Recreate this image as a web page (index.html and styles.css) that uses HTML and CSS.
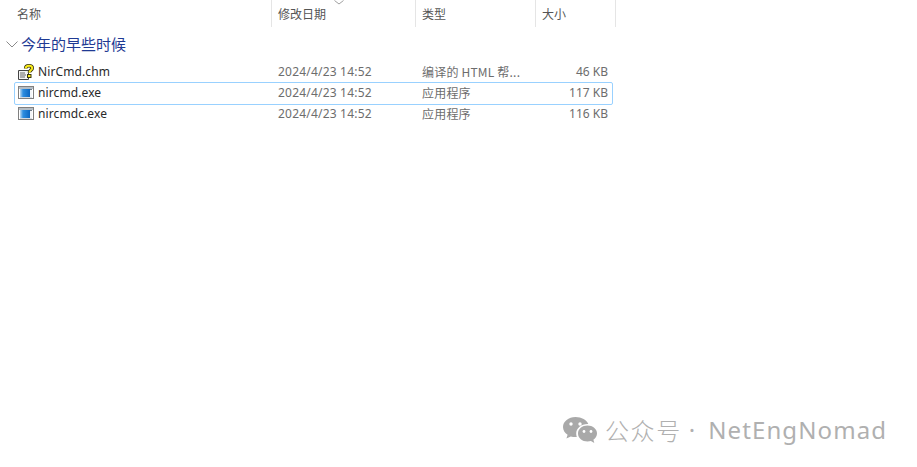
FILE: index.html
```html
<!DOCTYPE html>
<html lang="zh">
<head>
<meta charset="utf-8">
<title>NirCmd</title>
<link rel="stylesheet" href="styles.css">
</head>
<body>
<svg class="defs" width="0" height="0" aria-hidden="true">
  <defs>
    <linearGradient id="blue" x1="0" x2="1" y1="0" y2="0">
      <stop offset="0" stop-color="#bcd9f2"/>
      <stop offset="0.3" stop-color="#2f8ee0"/>
      <stop offset="1" stop-color="#0b66c2"/>
    </linearGradient>
  </defs>
  <symbol id="exe" viewBox="0 0 16 13">
    <rect x="0.5" y="0.5" width="15" height="12" fill="#fff" stroke="#808080"/>
    <rect x="1" y="1" width="14" height="2" fill="#b4bdc5"/>
    <rect x="2" y="3" width="10" height="8" fill="url(#blue)"/>
    <rect x="12" y="3" width="2" height="8" fill="#f4f6f8"/>
    <rect x="12" y="3" width="2" height="1" fill="#6d7a86"/>
    <rect x="2" y="11" width="12" height="1" fill="#d5dae0"/>
  </symbol>
</svg>
<main class="explorer">
  <header class="columns">
    <div class="col col-name">名称</div>
    <div class="col col-date">修改日期<svg class="sort" width="10" height="5" viewBox="0 0 10 5"><path d="M0.5 0.5L5 4L9.5 0.5" fill="none" stroke="#a0a0a0"/></svg></div>
    <div class="col col-type">类型</div>
    <div class="col col-size">大小</div>
  </header>
  <h2 class="group">
    <svg class="chevron" width="12" height="7" viewBox="0 0 12 7"><path d="M0.5 0.5L6 6L11.5 0.5" fill="none" stroke="#8a8a8a"/></svg>
    今年的早些时候
  </h2>
  <ul class="files">
    <li class="file">
      <span class="name">
        <svg class="icon" width="16" height="16" viewBox="0 0 16 16">
          <path d="M0.5 6.5H10.5V15.5H0.5Z" fill="#f4f4f4" stroke="#444"/>
          <path d="M2 9H7M2 11H8M2 13H7" stroke="#666"/>
          <path d="M7.7 4.4C7.7 2.4 9.4 1.8 11 1.8C12.8 1.8 14.2 2.6 14.2 4.2C14.2 6 11.4 6 11.4 8.6" fill="none" stroke="#3a3610" stroke-width="3.6"/>
          <path d="M7.7 4.4C7.7 2.4 9.4 1.8 11 1.8C12.8 1.8 14.2 2.6 14.2 4.2C14.2 6 11.4 6 11.4 8.6" fill="none" stroke="#f8ea1a" stroke-width="2"/>
          <rect x="9.5" y="10.5" width="3.5" height="3" fill="#f8ea1a" stroke="#3a3610"/>
        </svg>
        NirCmd.chm
      </span>
      <span class="date">2024/4/23 14:52</span>
      <span class="type">编译的 HTML 帮...</span>
      <span class="size">46 KB</span>
    </li>
    <li class="file selected">
      <span class="name"><svg class="icon" width="16" height="13"><use href="#exe"/></svg>nircmd.exe</span>
      <span class="date">2024/4/23 14:52</span>
      <span class="type">应用程序</span>
      <span class="size">117 KB</span>
    </li>
    <li class="file">
      <span class="name"><svg class="icon" width="16" height="13"><use href="#exe"/></svg>nircmdc.exe</span>
      <span class="date">2024/4/23 14:52</span>
      <span class="type">应用程序</span>
      <span class="size">116 KB</span>
    </li>
  </ul>
</main>
<aside class="watermark">
  <svg width="36" height="28" viewBox="0 0 36 28">
    <path d="M13.5 1C6.6 1 1 5.5 1 11C1 14.2 2.8 16.9 5.6 18.8L4.4 22.6L8.8 20.4C10.3 20.8 11.8 21 13.5 21C14 21 14.4 21 14.8 20.9C14.4 19.8 14.2 18.6 14.2 17.5C14.2 12.2 19.2 8 25.6 8C25.9 8 26.1 8 26.3 8C24.8 4 19.6 1 13.5 1Z" fill="#a9a9a9"/>
    <path d="M35 17.5C35 12.8 30.5 9.5 25.5 9.5C20.3 9.5 16 12.8 16 17.5C16 22.2 20.3 25.5 25.5 25.5C26.7 25.5 27.8 25.3 28.9 25L32.3 27L31.4 23.7C33.6 22.1 35 20 35 17.5Z" fill="#a9a9a9"/>
    <circle cx="9" cy="8" r="1.7" fill="#fff"/><circle cx="18" cy="8" r="1.7" fill="#fff"/>
    <circle cx="22" cy="15.5" r="1.4" fill="#fff"/><circle cx="29" cy="15.5" r="1.4" fill="#fff"/>
  </svg>
  <span class="mark-cn">公众号</span><span class="mark-dot">·</span><span class="mark-en">NetEngNomad</span>
</aside>
</body>
</html>
```
FILE: styles.css
```css
* { box-sizing: border-box; }
html, body { margin: 0; height: 100%; }
body {
  position: relative;
  width: 917px;
  height: 467px;
  overflow: hidden;
  background: #fff;
  font-family: "Noto Sans CJK SC", "Noto Sans", sans-serif;
  font-size: 12px;
  color: #6d6d6d;
}
.defs { position: absolute; }
.explorer { width: 616px; }
.columns {
  display: grid;
  grid-template-columns: 272px 144px 120px 80px;
  height: 27px;
}
.col {
  position: relative;
  border-right: 1px solid #e5e5e5;
  line-height: 27px;
  padding-left: 6px;
  color: #555;
}
.col-name { padding-left: 17px; }
.sort { position: absolute; left: 62px; top: 0; }
.group {
  display: flex;
  align-items: center;
  gap: 3px;
  height: 34px;
  margin: 0;
  padding-left: 6px;
  font-size: 15px;
  line-height: 34px;
  font-weight: 400;
  color: #1f3a93;
}
.files { list-style: none; margin: 0; padding: 0; }
.file {
  position: relative;
  display: grid;
  grid-template-columns: 272px 144px 120px 72px;
  align-items: center;
  height: 21px;
}
.selected::before {
  content: "";
  position: absolute;
  left: 14px;
  top: 0;
  width: 597px;
  height: 21px;
  border: 1px solid #99d1ff;
  border-radius: 2px;
}
.name {
  display: flex;
  align-items: center;
  gap: 4px;
  padding-left: 18px;
  font-family: "Noto Sans", sans-serif;
  letter-spacing: 0.1px;
  color: #2a2a2a;
  white-space: nowrap;
}
.icon { flex: none; }
.date {
  padding-left: 6px;
  font-family: "Noto Sans", sans-serif;
  letter-spacing: 0.2px;
}
.type { padding-left: 6px; white-space: nowrap; letter-spacing: 0.2px; }
.size { text-align: right; font-family: "Noto Sans", sans-serif; }
.watermark {
  position: absolute;
  left: 562px;
  top: 412px;
  display: flex;
  align-items: center;
  color: #b0b0b0;
  font-size: 24px;
  white-space: nowrap;
}
.mark-cn { margin-left: 7px; font-weight: 300; letter-spacing: 1.6px; }
.mark-dot { margin: 0 13px 0 7px; font-family: "Noto Sans", sans-serif; }
.mark-en { font-family: "Noto Sans", sans-serif; font-size: 24px; letter-spacing: 1.1px; }
```
